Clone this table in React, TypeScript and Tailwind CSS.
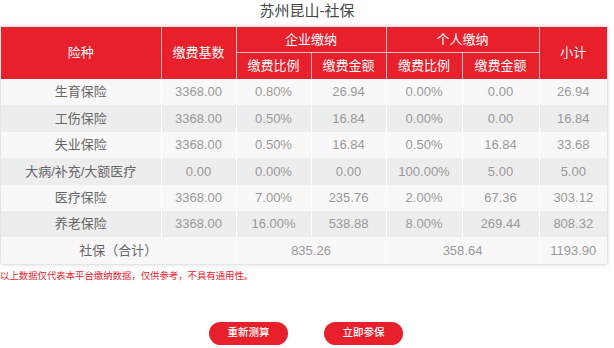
import React from "react";

const rows = [
  ["生育保险", "3368.00", "0.80%", "26.94", "0.00%", "0.00", "26.94"],
  ["工伤保险", "3368.00", "0.50%", "16.84", "0.00%", "0.00", "16.84"],
  ["失业保险", "3368.00", "0.50%", "16.84", "0.50%", "16.84", "33.68"],
  ["大病/补充/大额医疗", "0.00", "0.00%", "0.00", "100.00%", "5.00", "5.00"],
  ["医疗保险", "3368.00", "7.00%", "235.76", "2.00%", "67.36", "303.12"],
  ["养老保险", "3368.00", "16.00%", "538.88", "8.00%", "269.44", "808.32"],
];

export default function App() {
  const font = { fontFamily: '"Liberation Sans", "Noto Sans CJK SC", sans-serif' };
  return (
    <div className="w-[614px] h-[348px] bg-white overflow-hidden relative" style={font}>
      <div className="h-[27px] flex items-center justify-center text-[15px] text-[#444] pb-[4px]">
        苏州昆山-社保
      </div>
      <div className="ml-[1px] w-[606px] shadow-[0_0_4px_rgba(0,0,0,0.25)]">
        <table className="w-full border-collapse table-fixed text-[13px] text-center">
          <colgroup>
            <col className="w-[160px]" />
            <col className="w-[75px]" />
            <col className="w-[75px]" />
            <col className="w-[75px]" />
            <col className="w-[76px]" />
            <col className="w-[77px]" />
            <col className="w-[68px]" />
          </colgroup>
          <thead>
            <tr className="h-[25px] bg-[#e8202b] text-white">
              <th rowSpan={2} className="font-normal border-r border-white/70">险种</th>
              <th rowSpan={2} className="font-normal border-r border-white/70">缴费基数</th>
              <th colSpan={2} className="font-normal border-r border-b border-white/70">企业缴纳</th>
              <th colSpan={2} className="font-normal border-r border-b border-white/70">个人缴纳</th>
              <th rowSpan={2} className="font-normal">小计</th>
            </tr>
            <tr className="h-[27px] bg-[#e8202b] text-white">
              <th className="font-normal border-r border-white/70">缴费比例</th>
              <th className="font-normal border-r border-white/70">缴费金额</th>
              <th className="font-normal border-r border-white/70">缴费比例</th>
              <th className="font-normal border-r border-white/70">缴费金额</th>
            </tr>
          </thead>
          <tbody>
            {rows.map((r, i) => (
              <tr key={i} className={`h-[26.4px] ${i % 2 === 0 ? "bg-[#f9f7f8]" : "bg-[#ededed]"}`}>
                {r.map((c, j) => (
                  <td
                    key={j}
                    className={`p-0 ${j < 6 ? "border-r" : ""} border-white ${j === 0 ? "text-[#666]" : "text-[#999]"}`}
                  >
                    {c}
                  </td>
                ))}
              </tr>
            ))}
            <tr className="h-[26.4px] bg-[#f9f7f8]">
              <td colSpan={2} className="p-0 border-r border-white text-[#666]">社保（合计）</td>
              <td colSpan={2} className="p-0 border-r border-white text-[#999]">835.26</td>
              <td colSpan={2} className="p-0 border-r border-white text-[#999]">358.64</td>
              <td className="p-0 text-[#999]">1193.90</td>
            </tr>
          </tbody>
        </table>
      </div>
      <div className="mt-[7px] text-[9.4px] leading-[10px] text-[#e8202b] whitespace-nowrap">
        以上数据仅代表本平台缴纳数据，仅供参考，不具有通用性。
      </div>
      <div className="mt-[41px] flex justify-center gap-[36px] pr-[2px]">
        <button className="w-[79px] h-[23px] rounded-full bg-[#e8202b] text-white text-[10.5px] font-medium flex items-center justify-center">
          重新测算
        </button>
        <button className="w-[79px] h-[23px] rounded-full bg-[#e8202b] text-white text-[10.5px] font-medium flex items-center justify-center">
          立即参保
        </button>
      </div>
    </div>
  );
}
